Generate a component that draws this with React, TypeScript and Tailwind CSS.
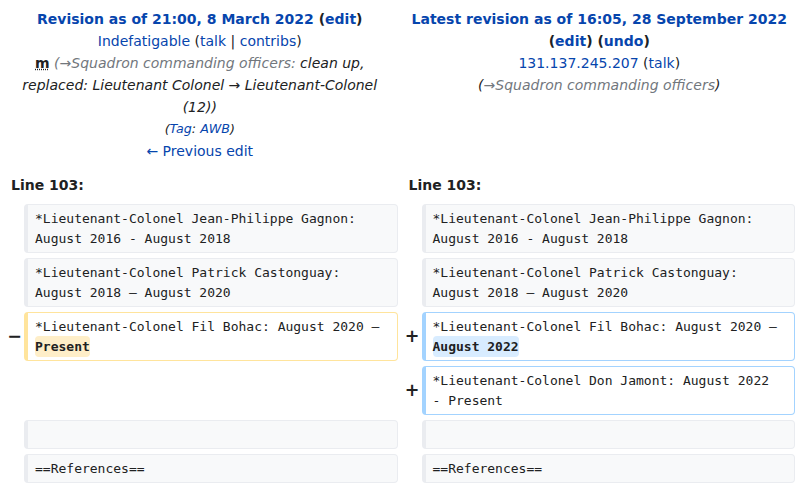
import React from 'react';

type Cell =
  | { kind: 'context'; text: React.ReactNode }
  | { kind: 'deleted'; text: React.ReactNode }
  | { kind: 'added'; text: React.ReactNode }
  | { kind: 'empty' };

interface Row {
  left: Cell;
  right: Cell;
}

const link = 'text-[#0645ad]';

const Change: React.FC<{ tone: 'del' | 'add'; children: React.ReactNode }> = ({ tone, children }) => (
  <span
    className={`font-bold rounded-[4px] py-[3px] ${tone === 'del' ? 'bg-[#feeec8]' : 'bg-[#d8ecff]'}`}
  >
    {children}
  </span>
);

const rows: Row[] = [
  {
    left: { kind: 'context', text: '*Lieutenant-Colonel Jean-Philippe Gagnon: August 2016 - August 2018' },
    right: { kind: 'context', text: '*Lieutenant-Colonel Jean-Philippe Gagnon: August 2016 - August 2018' },
  },
  {
    left: { kind: 'context', text: '*Lieutenant-Colonel Patrick Castonguay: August 2018 – August 2020' },
    right: { kind: 'context', text: '*Lieutenant-Colonel Patrick Castonguay: August 2018 – August 2020' },
  },
  {
    left: {
      kind: 'deleted',
      text: (
        <>
          *Lieutenant-Colonel Fil Bohac: August 2020 – <Change tone="del">Present</Change>
        </>
      ),
    },
    right: {
      kind: 'added',
      text: (
        <>
          *Lieutenant-Colonel Fil Bohac: August 2020 – <Change tone="add">August 2022</Change>
        </>
      ),
    },
  },
  {
    left: { kind: 'empty' },
    right: { kind: 'added', text: '*Lieutenant-Colonel Don Jamont: August 2022 - Present' },
  },
  {
    left: { kind: 'context', text: '\u00a0' },
    right: { kind: 'context', text: '\u00a0' },
  },
  {
    left: { kind: 'context', text: '==References==' },
    right: { kind: 'context', text: '==References==' },
  },
];

const DiffCell: React.FC<{ cell: Cell }> = ({ cell }) => {
  if (cell.kind === 'empty') {
    return (
      <>
        <div />
        <div />
      </>
    );
  }

  const marker = cell.kind === 'deleted' ? '−' : cell.kind === 'added' ? '+' : '';
  const box =
    cell.kind === 'context'
      ? 'bg-[#f8f9fa] border-[#eaecf0]'
      : cell.kind === 'deleted'
        ? 'bg-white border-[#ffe49c]'
        : 'bg-white border-[#a3d3ff]';

  return (
    <>
      <div className="flex items-center justify-end pr-[2px] text-[17.5px] font-bold leading-none text-[#202122]">
        {marker}
      </div>
      <div
        className={`border border-l-4 rounded-[4px] pt-[4px] pb-[3px] pl-[7px] pr-[12px] font-['DejaVu_Sans_Mono',monospace] text-[13px] leading-[20px] text-[#202122] whitespace-pre-wrap break-words ${box}`}
      >
        {cell.text}
      </div>
    </>
  );
};

export default function App() {
  return (
    <div className="w-[799px] h-[488px] overflow-hidden bg-white font-['DejaVu_Sans',sans-serif] text-[14px] text-[#202122]">
      {/* Revision headers */}
      <div className="grid grid-cols-2 pt-[8px] leading-[22px] text-center">
        <div className="px-2">
          <div className="font-bold">
            <span className={link}>Revision as of 21:00, 8 March 2022</span> (
            <span className={link}>edit</span>)
          </div>
          <div>
            <span className={link}>Indefatigable</span> (<span className={link}>talk</span> |{' '}
            <span className={link}>contribs</span>)
          </div>
          <div className="italic">
            <span className="not-italic font-bold underline decoration-dotted">m</span>{' '}
            <span className="text-[#72777d]">(→Squadron commanding officers:</span> clean up, replaced:
            Lieutenant Colonel → Lieutenant-Colonel (12))
          </div>
          <div className="italic text-[12.7px]">
            (<span className={link}>Tag</span>: <span className={link}>AWB</span>)
          </div>
          <div>
            <span className={link}>← Previous edit</span>
          </div>
        </div>
        <div className="px-2">
          <div className="font-bold">
            <span className={link}>Latest revision as of 16:05, 28 September 2022</span> (
            <span className={link}>edit</span>) (<span className={link}>undo</span>)
          </div>
          <div>
            <span className={link}>131.137.245.207</span> (<span className={link}>talk</span>)
          </div>
          <div className="italic">
            (<span className="text-[#72777d]">→Squadron commanding officers</span>)
          </div>
        </div>
      </div>

      {/* Diff table */}
      <div className="grid grid-cols-[24px_1fr_24px_1fr] gap-y-[5px] pr-[4px] mt-[12px]">
        <div className="col-span-2 pl-[11px] font-bold leading-[22px] mb-[3px]">Line 103:</div>
        <div className="col-span-2 pl-[11px] font-bold leading-[22px] mb-[3px]">Line 103:</div>
        {rows.map((row, i) => (
          <React.Fragment key={i}>
            <DiffCell cell={row.left} />
            <DiffCell cell={row.right} />
          </React.Fragment>
        ))}
      </div>
    </div>
  );
}
